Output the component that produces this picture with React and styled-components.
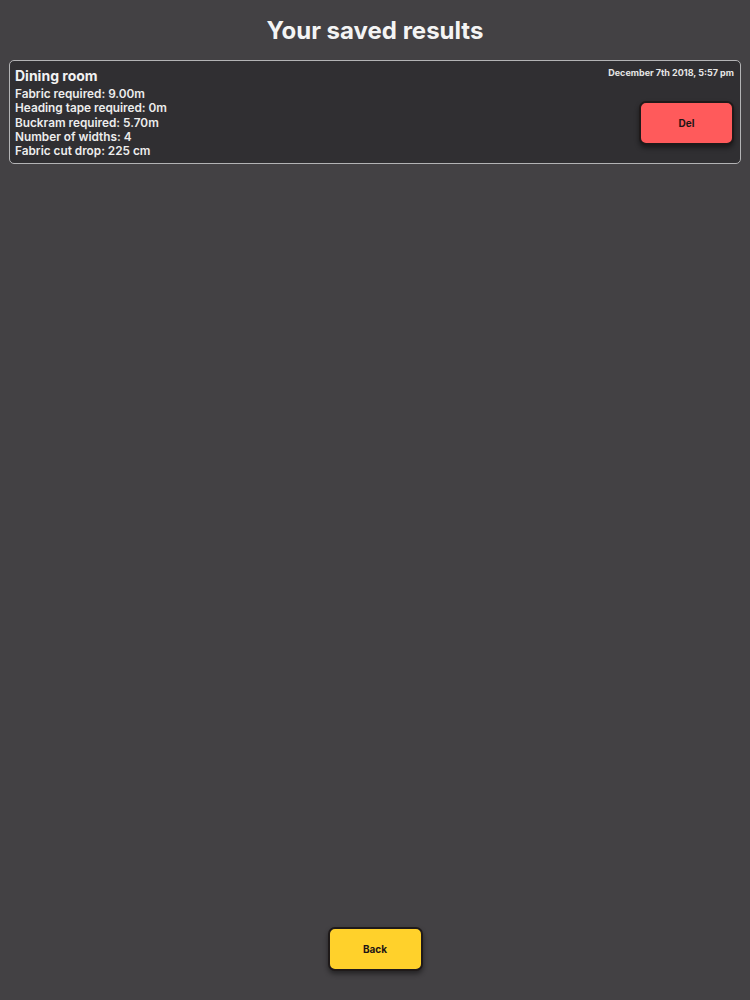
import React from 'react';
import styled, { createGlobalStyle } from 'styled-components';

const GlobalStyle = createGlobalStyle`
  html, body {
    margin: 0;
    padding: 0;
    background: #434144;
  }
  body {
    font-family: Inter, "Liberation Sans", Arial, sans-serif;
    color: #f2f2f2;
  }
`;

const Page = styled.div`
  display: flex;
  flex-direction: column;
  height: 1000px;
  box-sizing: border-box;
  padding: 0 9px 29px;
`;

const Heading = styled.h1`
  margin: 0;
  padding: 16px 0 15px;
  text-align: center;
  font-size: 24px;
  line-height: 29px;
  font-weight: 700;
  color: #f4f4f4;
`;

const ResultCard = styled.div`
  display: flex;
  justify-content: space-between;
  background: #302f32;
  border: 1px solid #b3b3b5;
  border-radius: 5px;
  padding: 6px 6px 5px 5px;
`;

const Details = styled.div`
  display: flex;
  flex-direction: column;
`;

const Name = styled.div`
  font-size: 14px;
  line-height: 17px;
  font-weight: 700;
  margin-bottom: 3px;
`;

const Line = styled.div`
  font-size: 11.8px;
  line-height: 14.3px;
  font-weight: 600;
  color: #ededed;
`;

const Side = styled.div`
  display: flex;
  flex-direction: column;
  align-items: flex-end;
`;

const Stamp = styled.div`
  font-size: 9px;
  line-height: 11px;
  font-weight: 700;
  color: #e6e6e6;
  margin-bottom: 23px;
`;

const Button = styled.button`
  width: 95px;
  height: 44px;
  box-sizing: border-box;
  border: 2px solid #1f1a1a;
  border-radius: 7px;
  background: ${p => p.colour};
  color: #1d1515;
  font-family: inherit;
  font-size: 10px;
  font-weight: 700;
  box-shadow: 0 3px 5px rgba(0, 0, 0, 0.45);
  cursor: pointer;
`;

const Footer = styled.div`
  margin-top: auto;
  display: flex;
  justify-content: center;
`;

const App = () => {
  const result = {
    name: 'Dining room',
    date: 'December 7th 2018, 5:57 pm',
    lines: [
      'Fabric required: 9.00m',
      'Heading tape required: 0m',
      'Buckram required: 5.70m',
      'Number of widths: 4',
      'Fabric cut drop: 225 cm',
    ],
  };

  return (
    <>
      <GlobalStyle />
      <Page>
        <Heading>Your saved results</Heading>
        <ResultCard>
          <Details>
            <Name>{result.name}</Name>
            {result.lines.map(line => (
              <Line key={line}>{line}</Line>
            ))}
          </Details>
          <Side>
            <Stamp>{result.date}</Stamp>
            <Button colour="#ff5a5b">Del</Button>
          </Side>
        </ResultCard>
        <Footer>
          <Button colour="#ffd12b">Back</Button>
        </Footer>
      </Page>
    </>
  );
};

export default App;
